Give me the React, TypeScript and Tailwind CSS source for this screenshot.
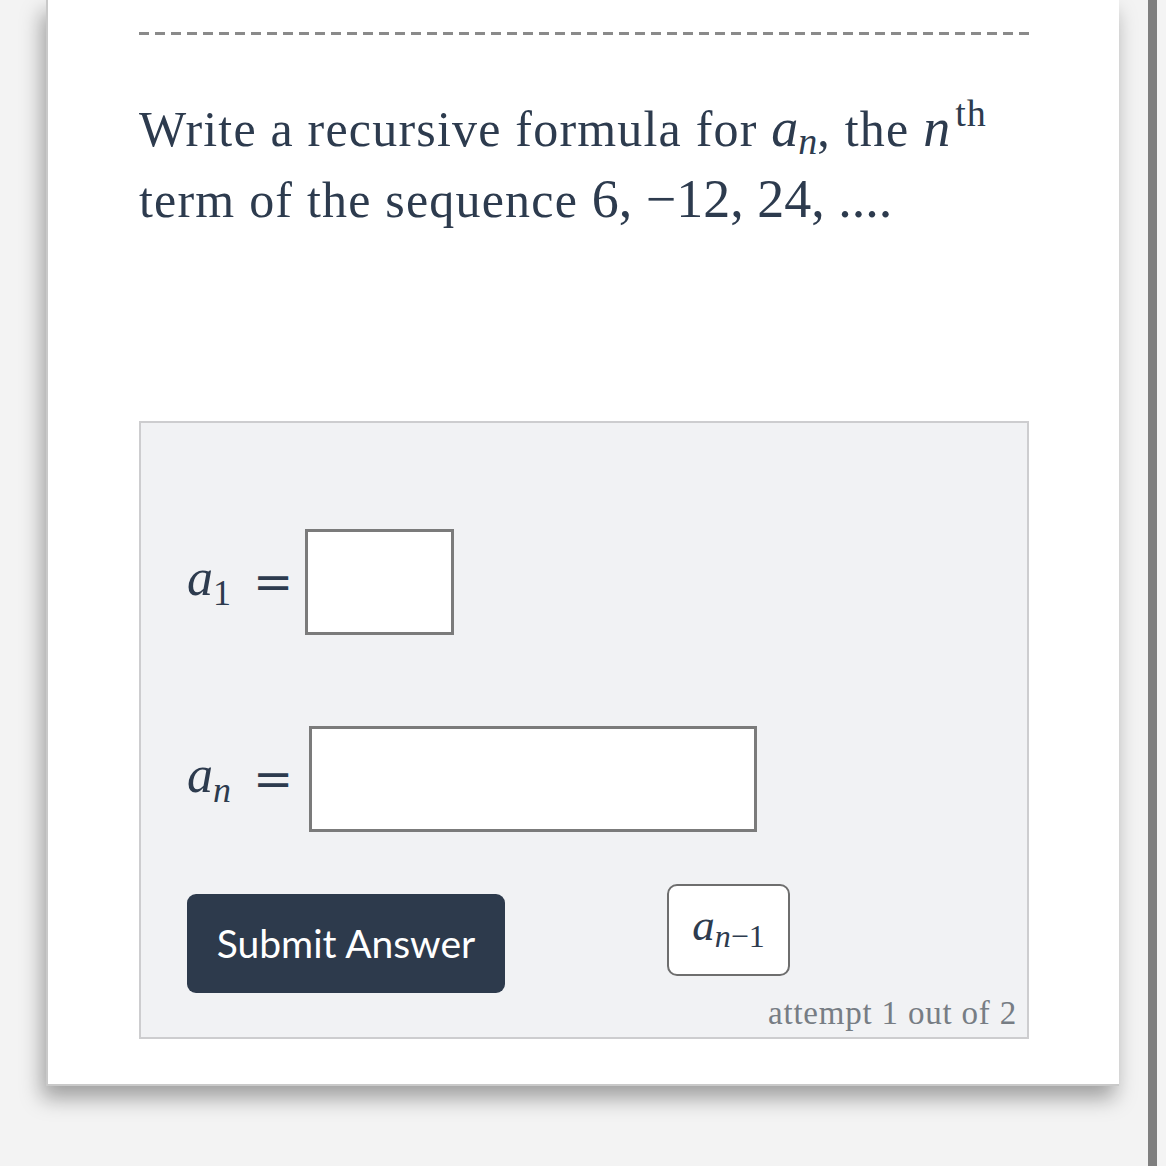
import React from "react";

const serif = { fontFamily: '"Liberation Serif", "DejaVu Serif", serif' };
const dv = { fontFamily: '"DejaVu Serif", serif' };

function Eq() {
  return (
    <span className="leading-none text-[48px]" style={dv}>
      =
    </span>
  );
}

export default function App() {
  return (
    <div className="w-[1166px] h-[1166px] bg-[#f3f3f3] flex overflow-hidden">
      <div className="w-[46px] shrink-0" />
      <div className="w-[1073px] h-[1086px] shrink-0 bg-white shadow-[-4px_12px_20px_rgba(0,0,0,0.35)] border-l-2 border-b-2 border-[#c9c9c9] flex flex-col pl-[91px] pr-[92px]">
        <div className="mt-[32px] h-[3px] w-[891px] bg-[repeating-linear-gradient(to_right,#8a8a8a_0_10px,transparent_10px_16px)]" />
        <div
          className="mt-[59px] text-[#2d3b4e] text-[50px] leading-[71px] tracking-[1.2px]"
          style={serif}
        >
          <div className="whitespace-nowrap h-[71px]">
            Write a recursive formula for{" "}
            <span className="leading-none text-[54px] tracking-normal">
              <span className="italic">a</span>
              <span className="italic text-[38px] relative top-[8px]">n</span>
            </span>
            , the{" "}
            <span className="leading-none text-[54px] tracking-normal">
              <span className="italic">n</span>
              <span className="text-[38px] relative top-[-20px] ml-[5px] tracking-[1px]">th</span>
            </span>
          </div>
          <div className="whitespace-nowrap h-[71px]">
            term of the sequence{" "}
            <span className="leading-none text-[54px] tracking-[0px]">6, −12, 24, ....</span>
          </div>
        </div>

        <div className="mt-[185px] w-[890px] h-[618px] bg-[#f1f2f4] border-2 border-[#cdcdcf] flex flex-col px-[46px] text-[#2d3b4e]">
          <div className="mt-[106px] flex items-center">
            <div className="w-[66px] relative top-[-4px]" style={serif}>
              <span className="italic text-[52px] leading-none">a</span>
              <span className="text-[36px] leading-none relative top-[10px]">1</span>
            </div>
            <Eq />
            <div className="ml-[12px] w-[149px] h-[106px] bg-white border-[3px] border-[#7b7b7b]" />
          </div>
          <div className="mt-[91px] flex items-center">
            <div className="w-[66px] relative top-[-4px]" style={serif}>
              <span className="italic text-[52px] leading-none">a</span>
              <span className="italic text-[36px] leading-none relative top-[10px]">n</span>
            </div>
            <Eq />
            <div className="ml-[16px] w-[448px] h-[106px] bg-white border-[3px] border-[#7b7b7b]" />
          </div>
          <div className="mt-[52px] flex items-start">
            <button
              className="mt-[10px] w-[318px] h-[99px] rounded-[9px] bg-[#2d3a4c] text-white text-[39px]"
              style={{ fontFamily: 'Lato, "Open Sans", sans-serif' }}
            >
              Submit Answer
            </button>
            <div className="ml-[162px] w-[123px] h-[92px] bg-white border-2 border-[#6e6e6e] rounded-[10px] flex items-center justify-center pb-[10px]">
              <span style={serif} className="text-[#2d3b4e] leading-none whitespace-nowrap">
                <span className="italic text-[45px]">a</span>
                <span className="italic text-[32px] relative top-[7px]">n</span>
                <span className="text-[32px] relative top-[7px]">−1</span>
              </span>
            </div>
          </div>
          <div
            className="mt-[0px] mr-[-36px] self-end text-[#777d84] text-[33px] leading-[40px] tracking-[0.8px]"
            style={serif}
          >
            attempt 1 out of 2
          </div>
        </div>
      </div>
      <div className="w-[29px] shrink-0" />
      <div className="w-[9px] shrink-0 bg-[#7f7f7f]" />
      <div className="flex-1 bg-[#f4f4f4]" />
    </div>
  );
}
